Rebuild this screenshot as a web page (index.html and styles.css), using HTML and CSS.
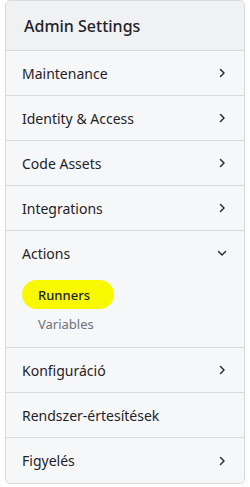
FILE: index.html
```html
<!DOCTYPE html>
<html>
<head>
<meta charset="utf-8">
<link rel="stylesheet" href="styles.css">
</head>
<body>
<nav class="card">
  <div class="header">Admin Settings</div>
  <div class="row"><span>Maintenance</span><svg class="chev" viewBox="0 0 16 16"><path d="M6.5 4.5l3.5 3.5-3.5 3.5"/></svg></div>
  <div class="row"><span>Identity &amp; Access</span><svg class="chev" viewBox="0 0 16 16"><path d="M6.5 4.5l3.5 3.5-3.5 3.5"/></svg></div>
  <div class="row"><span>Code Assets</span><svg class="chev" viewBox="0 0 16 16"><path d="M6.5 4.5l3.5 3.5-3.5 3.5"/></svg></div>
  <div class="row"><span>Integrations</span><svg class="chev" viewBox="0 0 16 16"><path d="M6.5 4.5l3.5 3.5-3.5 3.5"/></svg></div>
  <div class="section">
    <div class="row plain"><span>Actions</span><svg class="chev" viewBox="0 0 16 16"><path d="M4.5 6.5l3.5 3.5 3.5-3.5"/></svg></div>
    <ul class="sub">
      <li class="sub-item active">Runners</li>
      <li class="sub-item">Variables</li>
    </ul>
  </div>
  <div class="row"><span>Konfiguráció</span><svg class="chev" viewBox="0 0 16 16"><path d="M6.5 4.5l3.5 3.5-3.5 3.5"/></svg></div>
  <div class="row"><span>Rendszer-értesítések</span></div>
  <div class="row last"><span>Figyelés</span><svg class="chev" viewBox="0 0 16 16"><path d="M6.5 4.5l3.5 3.5-3.5 3.5"/></svg></div>
</nav>
</body>
</html>
```

FILE: styles.css
```css
* { box-sizing: border-box; }
html, body { margin: 0; padding: 0; background: #ffffff; }
body {
  font-family: "Noto Sans", "Open Sans", sans-serif;
  color: #1f2328;
}
.card {
  margin-left: 5px;
  width: 240px;
  height: 484px;
  border: 1px solid #d5d9e0;
  border-radius: 5px;
  background: #f6f7f9;
  overflow: hidden;
  display: flex;
  flex-direction: column;
}
.header {
  height: 51px;
  padding-left: 18px;
  display: flex;
  align-items: center;
  font-size: 16px;
  font-weight: 500;
  background: #f0f1f3;
  border-bottom: 1px solid #d5d9e0;
}
.row {
  height: 45px;
  flex: none;
  display: flex;
  align-items: center;
  justify-content: space-between;
  padding: 0 14px 0 16px;
  font-size: 14px;
  border-bottom: 1px solid #d5d9e0;
}
.row.plain { border-bottom: none; height: 44px; }
.row.last { border-bottom: none; }
.section {
  border-bottom: 1px solid #d5d9e0;
  height: 117px;
  flex: none;
}
.chev {
  width: 16px;
  height: 16px;
  fill: none;
  stroke: #2b2f36;
  stroke-width: 1.5;
  stroke-linecap: round;
  stroke-linejoin: round;
}
.sub {
  list-style: none;
  margin: 0;
  padding: 5px 0 0 16px;
}
.sub-item {
  font-size: 13px;
  padding-left: 16px;
  height: 29px;
  display: flex;
  align-items: center;
  color: #6b7280;
}
.sub-item.active {
  width: 92px;
  background: #f8f800;
  border-radius: 15px;
  color: #1f2328;
  font-weight: 500;
}
```
